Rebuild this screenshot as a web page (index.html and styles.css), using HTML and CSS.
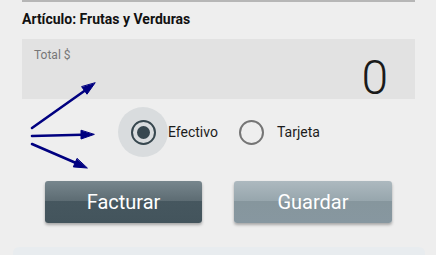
FILE: index.html
```html
<!DOCTYPE html>
<html lang="es">
<head>
<meta charset="utf-8">
<title>Artículo</title>
<link rel="stylesheet" href="styles.css">
</head>
<body>
<div class="page">
  <div class="topline"></div>
  <h2 class="title">Artículo: Frutas y Verduras</h2>
  <div class="total">
    <span class="total-label">Total $</span>
    <span class="total-value">0</span>
  </div>
  <div class="radios">
    <label class="radio">
      <span class="halo halo-active"><span class="ring ring-on"><span class="dot"></span></span></span>
      <span class="radio-text">Efectivo</span>
    </label>
    <label class="radio">
      <span class="halo"><span class="ring ring-off"></span></span>
      <span class="radio-text">Tarjeta</span>
    </label>
  </div>
  <div class="actions">
    <button class="btn btn-dark">Facturar</button>
    <button class="btn btn-light">Guardar</button>
  </div>
</div>
<div class="next-card"></div>
<svg class="arrows" width="436" height="255" viewBox="0 0 436 255">
  <g stroke="#000080" stroke-width="2.6" stroke-linecap="round" fill="#000080">
    <line x1="32" y1="128" x2="85" y2="90.5"/>
    <polygon points="95,83 87,94.2 81.8,86.9" stroke-width="1" stroke-linejoin="round"/>
    <line x1="32" y1="136" x2="82" y2="134.8"/>
    <polygon points="94,134.5 81,139 81,130.6" stroke-width="1" stroke-linejoin="round"/>
    <line x1="32" y1="144" x2="76" y2="163"/>
    <polygon points="87,168 73.3,166.9 76.9,158.7" stroke-width="1" stroke-linejoin="round"/>
  </g>
</svg>
</body>
</html>
```
FILE: styles.css
```css
html, body {
  margin: 0;
  padding: 0;
  background: #eeeeee;
  font-family: Roboto, "Liberation Sans", Arial, sans-serif;
  width: 436px;
  height: 255px;
  overflow: hidden;
  position: relative;
}

.page {
  padding: 0 21px 0 22px;
}

.topline {
  height: 2px;
  background: #b6b6b6;
}

.title {
  margin: 9px 0 0;
  font-size: 14px;
  line-height: 16px;
  font-weight: 700;
  color: #111111;
}

.total {
  margin-top: 12px;
  height: 60px;
  background: #e2e2e2;
  display: flex;
  justify-content: space-between;
  align-items: flex-start;
  padding: 0 27px 0 12px;
}

.total-label {
  margin-top: 9px;
  font-size: 12px;
  line-height: 14px;
  color: #777777;
}

.total-value {
  margin-top: 19px;
  font-size: 48px;
  line-height: 40px;
  font-weight: 300;
  color: #1a1a1a;
}

.radios {
  margin-top: 8px;
  padding-left: 96px;
  display: flex;
  align-items: center;
  height: 50px;
}

.radio {
  display: flex;
  align-items: center;
  margin-right: 9px;
}

.halo {
  width: 50px;
  height: 50px;
  border-radius: 50%;
  display: flex;
  align-items: center;
  justify-content: center;
}

.halo-active {
  background: #d9dcde;
}

.ring {
  box-sizing: border-box;
  width: 25px;
  height: 25px;
  border-radius: 50%;
  display: flex;
  align-items: center;
  justify-content: center;
}

.ring-on {
  border: 2.5px solid #37474f;
}

.ring-off {
  border: 2.5px solid #757575;
}

.dot {
  width: 13px;
  height: 13px;
  border-radius: 50%;
  background: #37474f;
}

.radio-text {
  font-size: 14px;
  line-height: 16px;
  color: #1c1c1c;
}

.actions {
  margin-top: 24px;
  display: flex;
  justify-content: center;
  gap: 32px;
}

.btn {
  width: 157px;
  height: 42px;
  border: none;
  border-radius: 3px;
  font-family: Roboto, "Liberation Sans", Arial, sans-serif;
  font-size: 20px;
  color: #ffffff;
  box-shadow: 0 2px 3px rgba(0, 0, 0, 0.3);
  padding: 0;
}

.btn-light {
  width: 158px;
}

.btn-dark {
  background: linear-gradient(to bottom, #77868d 0%, #5d6c73 47%, #46575f 48%, #43545c 100%);
}

.btn-light {
  background: linear-gradient(to bottom, #adb9bf 0%, #97a6ad 47%, #86969d 48%, #8797a0 100%);
}

.next-card {
  margin: 24px 11px 0 13px;
  height: 8px;
  background: #e8ecef;
  border-radius: 6px 6px 0 0;
}

.arrows {
  position: absolute;
  left: 0;
  top: 0;
  pointer-events: none;
}
```
